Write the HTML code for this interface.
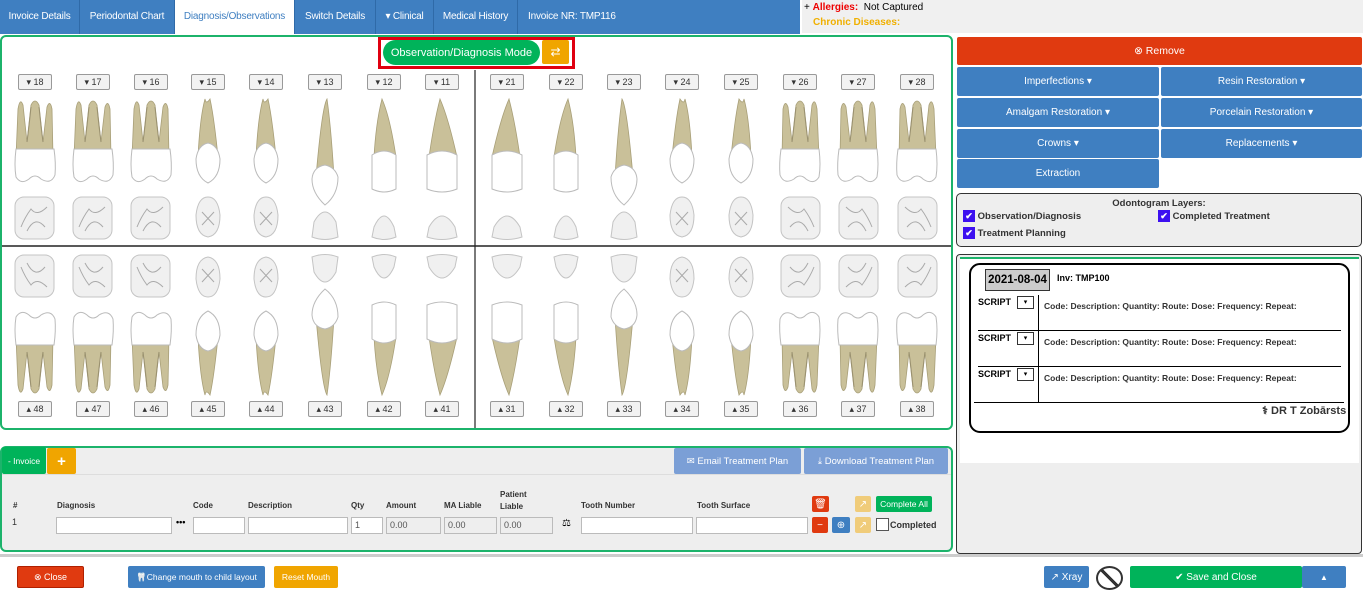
<!DOCTYPE html>
<html><head><meta charset="utf-8"><style>
*{box-sizing:border-box;margin:0;padding:0}
body{width:1363px;height:594px;overflow:hidden;background:#fff;font-family:"Liberation Sans",sans-serif;font-size:11px;position:relative}
.abs{position:absolute}
.tabs{left:0;top:0;width:800px;height:34px;background:#3f7fc1;display:flex}
.tab{color:#fff;font-size:10px;line-height:34px;border-right:1px solid #2f6aa8;height:34px;text-align:center;white-space:nowrap;overflow:hidden;letter-spacing:-0.2px}
.tab.act{background:#fff;color:#3f7fc1}
.btn{position:absolute;color:#fff;font-size:10px;display:flex;align-items:center;justify-content:center;border-radius:2px;white-space:nowrap}
.blue{background:#3f7fc1}
.lbl{position:absolute;width:34px;height:16px;border:1px solid #999;border-radius:2px;background:#f2f2f2;font-size:9px;color:#333;text-align:center;line-height:14px}
.hd{position:absolute;font-weight:bold;font-size:8px;color:#333}
.inp{position:absolute;height:17px;border:1px solid #bbb;background:#fff;font-size:9px;color:#555;padding-left:3px;line-height:15px}
.inp.g{background:#eee}
.sc{position:absolute;font-size:9px;font-weight:bold;color:#000}
</style></head><body>
<div class="abs tabs">
<div class="tab" style="width:80px">Invoice Details</div><div class="tab" style="width:95px">Periodontal Chart</div><div class="tab act" style="width:120px">Diagnosis/Observations</div><div class="tab" style="width:81px">Switch Details</div><div class="tab" style="width:58px">▾ Clinical</div><div class="tab" style="width:84px">Medical History</div><div class="tab" style="flex:1;border:0;text-align:left;padding-left:10px">Invoice NR: TMP116</div>
</div>
<div class="abs" style="left:802px;top:0;width:561px;height:33px;background:#f0f0f0;font-size:10px;padding:2px 2px">
<div>+ <b style="color:#e00">Allergies:</b>&nbsp; Not Captured</div>
<div style="margin-top:4px;padding-left:9px;color:#f0b000;font-weight:bold">Chronic Diseases:</div></div>

<div class="abs" style="left:0;top:35px;width:953px;height:395px;border:2px solid #1cb36b;border-radius:6px"></div>
<div class="abs" style="left:378px;top:37px;width:197px;height:32px;border:3px solid #e00010"></div>
<div class="btn" style="left:383px;top:40px;width:157px;height:25px;background:#00b35a;border-radius:13px;font-size:11px">Observation/Diagnosis Mode</div>
<div class="btn" style="left:542px;top:40px;width:27px;height:24px;background:#f0a500;font-size:12px">⇄</div>
<svg class="abs" style="left:0;top:0" width="953" height="430" id="ch"></svg>
<div id="lbls"></div>

<div class="abs" style="left:0;top:446px;width:953px;height:106px;border:2px solid #1cb36b;border-radius:6px;background:#eee"></div>
<div class="abs" style="left:2px;top:474px;width:949px;height:1px;background:#ddd"></div>
<div class="btn" style="left:2px;top:447px;width:44px;height:27px;background:#00b35a;font-size:8.5px">- Invoice</div>
<div class="btn" style="left:47px;top:448px;width:29px;height:26px;background:#f0a500;font-size:15px;font-weight:bold">+</div>
<div class="btn" style="left:674px;top:448px;width:127px;height:26px;background:#7b9fd6;font-size:9.5px">✉ Email Treatment Plan</div>
<div class="btn" style="left:804px;top:448px;width:144px;height:26px;background:#7b9fd6;font-size:9.5px">⤓ Download Treatment Plan</div>
<div class="hd" style="left:13px;top:501px">#</div>
<div class="hd" style="left:57px;top:501px">Diagnosis</div>
<div class="hd" style="left:193px;top:501px">Code</div>
<div class="hd" style="left:248px;top:501px">Description</div>
<div class="hd" style="left:351px;top:501px">Qty</div>
<div class="hd" style="left:386px;top:501px">Amount</div>
<div class="hd" style="left:444px;top:501px">MA Liable</div>
<div class="hd" style="left:500px;top:489px;line-height:12px">Patient<br>Liable</div>
<div class="hd" style="left:581px;top:501px">Tooth Number</div>
<div class="hd" style="left:697px;top:501px">Tooth Surface</div>
<div class="abs" style="left:12px;top:517px;font-size:9px;color:#333">1</div>
<div class="inp" style="left:56px;top:517px;width:116px"></div>
<div class="abs" style="left:176px;top:517px;font-size:9px;font-weight:bold">•••</div>
<div class="inp" style="left:193px;top:517px;width:52px"></div>
<div class="inp" style="left:248px;top:517px;width:100px"></div>
<div class="inp" style="left:351px;top:517px;width:32px">1</div>
<div class="inp g" style="left:386px;top:517px;width:55px">0.00</div>
<div class="inp g" style="left:444px;top:517px;width:53px">0.00</div>
<div class="inp g" style="left:500px;top:517px;width:53px">0.00</div>
<div class="abs" style="left:562px;top:518px;font-size:10px">⚖</div>
<div class="inp" style="left:581px;top:517px;width:112px"></div>
<div class="inp" style="left:696px;top:517px;width:112px"></div>
<div class="btn" style="left:812px;top:496px;width:17px;height:16px;background:#e03a10">🗑</div>
<div class="btn" style="left:855px;top:496px;width:16px;height:16px;background:#f0cc7a">↗</div>
<div class="btn" style="left:876px;top:496px;width:56px;height:16px;background:#00b35a;font-size:8.5px">Complete All</div>
<div class="btn" style="left:812px;top:517px;width:16px;height:16px;background:#e03a10">−</div>
<div class="btn" style="left:832px;top:517px;width:18px;height:16px;background:#3f7fc1">⊕</div>
<div class="btn" style="left:855px;top:517px;width:16px;height:16px;background:#f0cc7a">↗</div>
<div class="abs" style="left:876px;top:518px;width:13px;height:13px;border:1px solid #555;background:#fff"></div>
<div class="abs" style="left:890px;top:520px;font-size:9px;font-weight:bold;color:#333">Completed</div>

<div class="abs" style="left:0;top:554px;width:1363px;height:3px;background:#ccc"></div>
<div class="btn" style="left:17px;top:566px;width:67px;height:22px;background:#e03a10;border:1px solid #b02000;font-size:9px">⊗ Close</div>
<div class="btn" style="left:128px;top:566px;width:137px;height:22px;background:#3f7fc1;font-size:8.5px">🦷Change mouth to child layout</div>
<div class="btn" style="left:274px;top:566px;width:64px;height:22px;background:#f0a500;font-size:8.5px">Reset Mouth</div>
<div class="btn" style="left:1044px;top:566px;width:45px;height:22px;background:#3f7fc1;font-size:10px">↗ Xray</div>
<div class="abs" style="left:1096px;top:566px;width:27px;height:24px;border:2px solid #333;border-radius:50%;background:linear-gradient(45deg,transparent 45%,#333 45%,#333 55%,transparent 55%)"></div>
<div class="btn" style="left:1130px;top:566px;width:172px;height:22px;background:#00b35a;font-size:10px">✔ Save and Close</div>
<div class="btn" style="left:1302px;top:566px;width:44px;height:22px;background:#3f7fc1;font-size:8px">▲</div>

<div class="btn" style="left:957px;top:37px;width:405px;height:28px;background:#e03a10;font-size:10.5px">⊗ Remove</div>
<div class="btn blue" style="left:957px;top:67px;width:202px;height:29px;font-size:10px">Imperfections ▾</div>
<div class="btn blue" style="left:1161px;top:67px;width:201px;height:29px;font-size:10px">Resin Restoration ▾</div>
<div class="btn blue" style="left:957px;top:98px;width:202px;height:29px;font-size:10px">Amalgam Restoration ▾</div>
<div class="btn blue" style="left:1161px;top:98px;width:201px;height:29px;font-size:10px">Porcelain Restoration ▾</div>
<div class="btn blue" style="left:957px;top:129px;width:202px;height:29px;font-size:10px">Crowns ▾</div>
<div class="btn blue" style="left:1161px;top:129px;width:201px;height:29px;font-size:10px">Replacements ▾</div>
<div class="btn blue" style="left:957px;top:159px;width:202px;height:29px;font-size:10px">Extraction</div>
<div class="abs" style="left:956px;top:193px;width:406px;height:54px;border:1px solid #333;border-radius:5px;background:#eee;font-size:9.5px;font-weight:bold;color:#333">
<div style="text-align:center;margin-top:4px">Odontogram Layers:</div>
<div class="abs" style="left:6px;top:16px"><span style="display:inline-block;width:12px;height:12px;background:#3d10f0;color:#fff;font-size:9px;line-height:12px;text-align:center">✔</span> Observation/Diagnosis</div>
<div class="abs" style="left:201px;top:16px"><span style="display:inline-block;width:12px;height:12px;background:#3d10f0;color:#fff;font-size:9px;line-height:12px;text-align:center">✔</span> Completed Treatment</div>
<div class="abs" style="left:6px;top:33px"><span style="display:inline-block;width:12px;height:12px;background:#3d10f0;color:#fff;font-size:9px;line-height:12px;text-align:center">✔</span> Treatment Planning</div>
</div>
<div class="abs" style="left:956px;top:254px;width:406px;height:300px;border:1px solid #333;border-radius:4px;background:#eee"></div>
<div class="abs" style="left:960px;top:257px;width:399px;height:206px;background:#fff;border-top:2px solid #1cb36b"></div>
<div class="abs" style="left:969px;top:263px;width:381px;height:170px;border:2px solid #000;border-radius:11px"></div>
<div class="abs" style="left:985px;top:269px;width:65px;height:22px;border:1px solid #333;background:#ccc;font-weight:bold;font-size:11.5px;text-align:center;line-height:20px">2021-08-04</div>
<div class="sc" style="left:1057px;top:273px">Inv: TMP100</div>
<div class="abs" style="left:1038px;top:295px;width:1px;height:108px;background:#000"></div>
<div class="abs" style="left:978px;top:330px;width:363px;height:1px;background:#000"></div>
<div class="abs" style="left:978px;top:366px;width:363px;height:1px;background:#000"></div>
<div class="abs" style="left:974px;top:402px;width:370px;height:1px;background:#000"></div>
<div id="scr"></div>
<div class="abs" style="left:1262px;top:404px;font-size:11px;font-weight:bold;color:#333">⚕ DR T Zobārsts</div>

<script>
var s='';
[0,36,72].forEach(function(d){
s+='<div class="sc" style="left:978px;top:'+(297+d)+'px">SCRIPT</div><div class="abs" style="left:1017px;top:'+(296+d)+'px;width:17px;height:13px;border:1px solid #333;font-size:7px;text-align:center;line-height:11px">▾</div><div class="abs" style="left:1044px;top:'+(301+d)+'px;font-size:8.5px;font-weight:bold;color:#333">Code: Description: Quantity: Route: Dose: Frequency: Repeat:</div>';
});
document.getElementById('scr').innerHTML=s;
var cx=[35,93,151,208,266,325,384,442,507,566,624,682,741,800,858,917];
var up=[18,17,16,15,14,13,12,11,21,22,23,24,25,26,27,28];
var lo=[48,47,46,45,44,43,42,41,31,32,33,34,35,36,37,38];
var typ=[7,6,5,4,3,2,1,0,0,1,2,3,4,5,6,7];
var L='';
cx.forEach(function(x,i){
L+='<div class="lbl" style="left:'+(x-17)+'px;top:74px">▾ '+up[i]+'</div>';
L+='<div class="lbl" style="left:'+(x-17)+'px;top:401px">▴ '+lo[i]+'</div>';
});
document.getElementById('lbls').innerHTML=L;
var R='fill="#c9c099" stroke="#a89f78" stroke-width="0.8"',C='fill="#fff" stroke="#bbb" stroke-width="1"',O='fill="#f0f0f0" stroke="#c4c4c4" stroke-width="1"';
function tooth(t){
 var g='';
 if(t>=5){
  g+='<path d="M-18 60 L-17 12 Q-15 2 -12 10 L-8 45 L-4 8 Q0 0 4 8 L8 45 L12 8 Q15 0 17 12 L19 60 Z" '+R+'/>';
  g+='<path d="M-8 45 Q-6 30 -4 10 M8 45 Q6 30 4 10" stroke="#9a9170" fill="none"/>';
  g+='<path d="M-19 52 L19 52 Q21 68 19 80 Q14 88 6 82 Q0 76 -6 82 Q-16 88 -20 78 Q-21 66 -19 52Z" '+C+'/>';
  g+='<rect x="-19" y="100" width="39" height="42" rx="9" '+O+'/><path d="M-12 110 Q-2 120 4 112 Q10 120 14 130 M-10 130 Q0 118 8 134" stroke="#aaa" fill="none"/>';
 }else if(t>=3){
  g+='<path d="M-10 60 Q-6 20 -2 2 Q2 8 3 2 Q8 20 10 60Z" '+R+'/>';
  g+='<path d="M-12 62 Q-10 48 0 46 Q10 48 12 62 Q12 80 0 86 Q-12 80 -12 62Z" '+C+'/>';
  g+='<path d="M-12 118 Q-10 100 0 100 Q10 100 12 118 Q12 138 0 140 Q-12 138 -12 118Z" '+O+'/><path d="M-6 115 L6 128 M6 115 L-6 128" stroke="#aaa"/>';
 }else if(t==2){
  g+='<path d="M-9 80 Q-6 30 -2 2 Q3 10 9 80Z" '+R+'/>';
  g+='<path d="M-13 80 Q-10 70 0 68 Q12 70 13 82 Q13 96 0 108 Q-13 98 -13 80Z" '+C+'/>';
  g+='<path d="M-13 140 L-11 125 Q0 105 11 125 L13 140 Q0 145 -13 140Z" '+O+'/>';
 }else{
  var w=t==0?15:12;
  g+='<path d="M-'+w+' 60 Q-6 20 2 2 Q8 25 '+(w-2)+' 60Z" '+R+'/>';
  g+='<path d="M-'+w+' 58 Q0 50 '+w+' 58 L'+w+' 92 Q0 98 -'+w+' 92Z" '+C+'/>';
  g+='<path d="M-'+w+' 140 L-'+(w-2)+' 130 Q0 108 '+(w-2)+' 130 L'+w+' 140 Q0 145 -'+w+' 140Z" '+O+'/>';
 }
 return g;
}
var S='<line x1="2" y1="246" x2="951" y2="246" stroke="#222" stroke-width="1.5"/><line x1="475" y1="70" x2="475" y2="428" stroke="#222" stroke-width="1.2"/>';
cx.forEach(function(x,i){
 var t=typ[i],f=i>7?-1:1;
 var g=tooth(t);
 S+='<g transform="translate('+x+',97) scale('+(-f)+',1)">'+g+'</g>';
 S+='<g transform="translate('+x+',397) scale('+(-f)+',-1)">'+g+'</g>';
});
document.getElementById('ch').innerHTML=S;
</script>
</body></html>
